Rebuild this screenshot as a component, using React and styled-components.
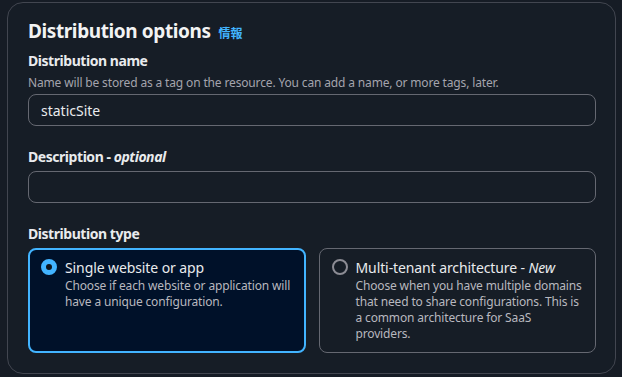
import React from 'react';
import styled, { createGlobalStyle } from 'styled-components';

const GlobalStyle = createGlobalStyle`
  html, body {
    margin: 0;
    background: #161c25;
  }
  body {
    font-family: "Noto Sans", "Noto Sans CJK JP", sans-serif;
    color: #dedee3;
  }
`;

const Panel = styled.section`
  margin: 2px 6px 4px 7px;
  padding: 16px 19px 20px 20px;
  border: 1px solid #424650;
  border-radius: 16px;
  background: #161d26;
`;

const Header = styled.div`
  display: flex;
  align-items: baseline;
  gap: 8px;
  margin-bottom: 8px;
`;

const Title = styled.h2`
  margin: 0;
  font-size: 19px;
  line-height: 24px;
  font-weight: 700;
  letter-spacing: -0.4px;
  color: #f2f3f3;
`;

const InfoLink = styled.a`
  font-family: "Noto Sans CJK JP", sans-serif;
  font-size: 12px;
  font-weight: 700;
  color: #42b4ff;
  text-decoration: none;
`;

const Field = styled.div`
  display: flex;
  flex-direction: column;
  margin-bottom: ${({ $last }) => ($last ? '0' : '21px')};
`;

const Label = styled.label`
  font-size: 14px;
  line-height: 20px;
  font-weight: 700;
  letter-spacing: -0.45px;
  color: #e9ebed;
  margin-bottom: 4px;

  em {
    font-style: italic;
  }
`;

const Hint = styled.div`
  font-size: 12px;
  line-height: 16px;
  letter-spacing: -0.15px;
  color: #a4a4ad;
  margin-bottom: 3px;
`;

const Input = styled.input`
  box-sizing: border-box;
  width: 100%;
  height: 32px;
  padding: 4px 12px;
  border: 1px solid #656871;
  border-radius: 8px;
  background: transparent;
  color: #e9ebed;
  font-family: "Noto Sans", sans-serif;
  font-size: 14px;
  outline: none;
`;

const Cards = styled.div`
  display: grid;
  grid-template-columns: 1fr 1fr;
  gap: 13px;
`;

const Card = styled.div`
  display: flex;
  gap: 8px;
  border-radius: 8px;
  border: ${({ $selected }) => ($selected ? '2px solid #42b4ff' : '1px solid #656871')};
  background: ${({ $selected }) => ($selected ? '#001129' : '#161d26')};
  padding: ${({ $selected }) => ($selected ? '8px 11px 9px 11px' : '9px 12px 10px 12px')};
`;

const Radio = styled.span`
  flex: none;
  box-sizing: border-box;
  width: 16px;
  height: 16px;
  margin-top: 1px;
  border-radius: 50%;
  border: ${({ $checked }) => ($checked ? '5px solid #42b4ff' : '2px solid #8c8c94')};
  background: ${({ $checked }) => ($checked ? '#0f141a' : 'transparent')};
`;

const CardText = styled.div`
  display: flex;
  flex-direction: column;
`;

const CardTitle = styled.div`
  font-size: 14px;
  line-height: 20px;
  letter-spacing: -0.1px;
  color: #e9ebed;

  em {
    font-style: italic;
  }
`;

const CardDesc = styled.div`
  font-size: 12px;
  line-height: 16px;
  letter-spacing: -0.15px;
  color: #b8b8bf;
`;

const options = [
  {
    title: 'Single website or app',
    desc: 'Choose if each website or application will have a unique configuration.',
    selected: true,
  },
  {
    title: (
      <>
        Multi-tenant architecture - <em>New</em>
      </>
    ),
    desc: 'Choose when you have multiple domains that need to share configurations. This is a common architecture for SaaS providers.',
    selected: false,
  },
];

export default function App() {
  return (
    <>
      <GlobalStyle />
      <Panel>
        <Header>
          <Title>Distribution options</Title>
          <InfoLink href="#">情報</InfoLink>
        </Header>

        <Field>
          <Label>Distribution name</Label>
          <Hint>Name will be stored as a tag on the resource. You can add a name, or more tags, later.</Hint>
          <Input defaultValue="staticSite" />
        </Field>

        <Field>
          <Label>
            Description - <em>optional</em>
          </Label>
          <Input />
        </Field>

        <Field $last>
          <Label>Distribution type</Label>
          <Cards>
            {options.map((opt, idx) => (
              <Card key={idx} $selected={opt.selected}>
                <Radio $checked={opt.selected} />
                <CardText>
                  <CardTitle>{opt.title}</CardTitle>
                  <CardDesc>{opt.desc}</CardDesc>
                </CardText>
              </Card>
            ))}
          </Cards>
        </Field>
      </Panel>
    </>
  );
}
